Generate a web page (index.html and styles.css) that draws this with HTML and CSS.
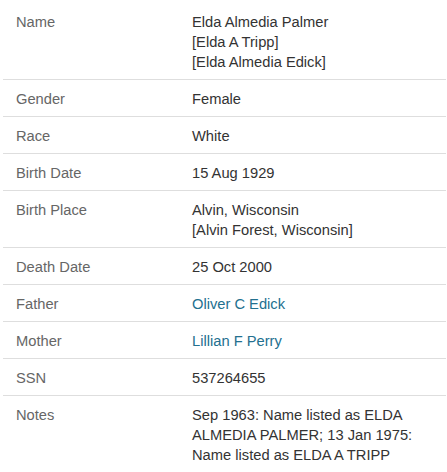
FILE: index.html
```html
<!DOCTYPE html>
<html>
<head>
<meta charset="utf-8">
<link rel="stylesheet" href="styles.css">
</head>
<body>
<div class="facts">
  <div class="row"><div class="label">Name</div><div class="value">Elda Almedia Palmer<br>[Elda A Tripp]<br>[Elda Almedia Edick]</div></div>
  <div class="row"><div class="label">Gender</div><div class="value">Female</div></div>
  <div class="row"><div class="label">Race</div><div class="value">White</div></div>
  <div class="row"><div class="label">Birth Date</div><div class="value">15 Aug 1929</div></div>
  <div class="row"><div class="label">Birth Place</div><div class="value">Alvin, Wisconsin<br>[Alvin Forest, Wisconsin]</div></div>
  <div class="row"><div class="label">Death Date</div><div class="value">25 Oct 2000</div></div>
  <div class="row"><div class="label">Father</div><div class="value"><a class="link" href="#">Oliver C Edick</a></div></div>
  <div class="row"><div class="label">Mother</div><div class="value"><a class="link" href="#">Lillian F Perry</a></div></div>
  <div class="row"><div class="label">SSN</div><div class="value">537264655</div></div>
  <div class="row last"><div class="label">Notes</div><div class="value">Sep 1963: Name listed as ELDA ALMEDIA PALMER; 13 Jan 1975: Name listed as ELDA A TRIPP</div></div>
</div>
</body>
</html>
```
FILE: styles.css
```css
html, body {
  margin: 0;
  padding: 0;
  background: #fff;
}
body {
  font-family: "Liberation Sans", Arial, sans-serif;
  font-size: 14.7px;
  line-height: 20px;
  color: #333;
}
.facts {
  margin: 3px 1px 0 3px;
}
.row {
  display: grid;
  grid-template-columns: 176px 1fr;
  padding: 9px 14px 7px 13px;
  border-bottom: 1px solid #dedede;
}
.row.last {
  border-bottom: none;
}
.label {
  color: #666;
}
.value {
  color: #333;
}
.link {
  color: #23708f;
  text-decoration: none;
}
```
